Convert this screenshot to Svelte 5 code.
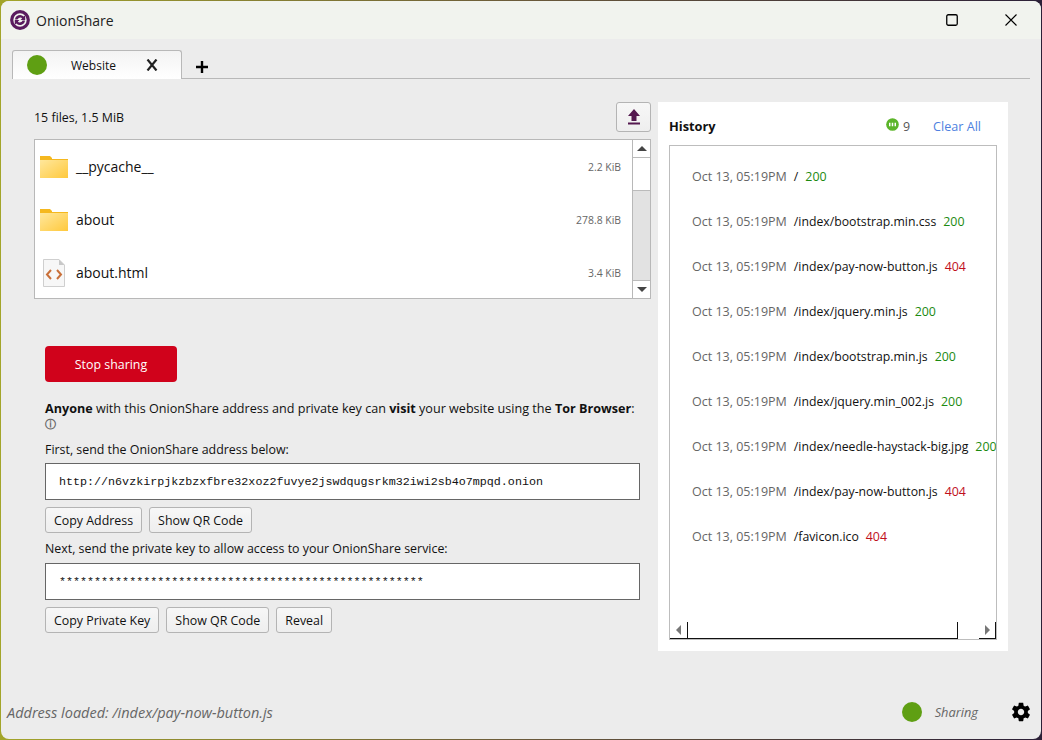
<script>
  const files = [
    { name: '__pycache__', size: '2.2 KiB', kind: 'folder' },
    { name: 'about', size: '278.8 KiB', kind: 'folder' },
    { name: 'about.html', size: '3.4 KiB', kind: 'html' }
  ];
  const history = [
    { path: '/', code: 200 },
    { path: '/index/bootstrap.min.css', code: 200 },
    { path: '/index/pay-now-button.js', code: 404 },
    { path: '/index/jquery.min.js', code: 200 },
    { path: '/index/bootstrap.min.js', code: 200 },
    { path: '/index/jquery.min_002.js', code: 200 },
    { path: '/index/needle-haystack-big.jpg', code: 200 },
    { path: '/index/pay-now-button.js', code: 404 },
    { path: '/favicon.ico', code: 404 }
  ];
</script>

<div class="window">
  <header class="titlebar">
    <svg class="logo" viewBox="0 0 20 20" width="20" height="20">
      <circle cx="10" cy="10" r="8.3" fill="none" stroke="#5a1a5e" stroke-width="3.2" />
      <path d="M5 9.5 A5 5 0 0 1 13.6 6.6 L15.2 5.2 L15.2 10 L10.6 10 L12.2 8.3 A3 3 0 0 0 7.4 9.5 Z" fill="#5a1a5e" />
      <path d="M15 10.5 A5 5 0 0 1 6.4 13.4 L4.8 14.8 L4.8 10 L9.4 10 L7.8 11.7 A3 3 0 0 0 12.6 10.5 Z" fill="#5a1a5e" />
    </svg>
    <span class="app-name">OnionShare</span>
    <div class="controls">
      <svg viewBox="0 0 12 12" width="12" height="12"><rect x="0.75" y="0.75" width="10.5" height="10.5" rx="1.5" fill="none" stroke="#000" stroke-width="1.3" /></svg>
      <svg viewBox="0 0 12 12" width="12" height="12"><path d="M0.5 0.5 L11.5 11.5 M11.5 0.5 L0.5 11.5" stroke="#000" stroke-width="1.1" /></svg>
    </div>
  </header>

  <div class="tabbar">
    <div class="tab">
      <span class="dot"></span>
      <span class="tab-label">Website</span>
      <svg class="tab-close" viewBox="0 0 12 12" width="12" height="12"><path d="M1.5 0.5 L10.5 11.5 M10.5 0.5 L1.5 11.5" stroke="#222" stroke-width="2.2" /></svg>
    </div>
    <svg class="tab-add" viewBox="0 0 14 14" width="14" height="14"><path d="M7 1 V13 M1 7 H13" stroke="#000" stroke-width="2.4" /></svg>
  </div>

  <main class="content">
    <section class="left">
      <div class="files-head">
        <span>15 files, 1.5 MiB</span>
        <button class="upload">
          <svg viewBox="0 0 16 16" width="16" height="16"><path d="M8 0 L14 7 H10.5 V12 H5.5 V7 H2 Z M2 13.5 H14 V15.5 H2 Z" fill="#54184f" /></svg>
        </button>
      </div>

      <div class="filelist">
        <ul>
          {#each files as f}
            <li>
              <span class="ficon">
                {#if f.kind === 'folder'}
                  <svg viewBox="0 0 28 22" width="28" height="22">
                    <defs>
                      <linearGradient id="fold" x1="0" y1="0" x2="1" y2="1">
                        <stop offset="0" stop-color="#ffe79c" />
                        <stop offset="1" stop-color="#ffc93d" />
                      </linearGradient>
                    </defs>
                    <path d="M0 0 H10 L12 2 V3 H28 V22 H0 Z" fill="#f5b81f" />
                    <rect x="0" y="4" width="28" height="18" fill="url(#fold)" />
                  </svg>
                {:else}
                  <svg viewBox="0 0 22 28" width="22" height="28">
                    <path d="M0.5 0.5 H16 L21.5 6 V27.5 H0.5 Z" fill="#f7f7f7" stroke="#cfcfcf" />
                    <path d="M16 0.5 V6 H21.5 Z" fill="#c8c8c8" />
                    <path d="M8 11 L4 15.5 L8 20 M14 11 L18 15.5 L14 20" fill="none" stroke="#c9703a" stroke-width="2" />
                  </svg>
                {/if}
              </span>
              <span class="fname">{f.name}</span>
              <span class="fsize">{f.size}</span>
            </li>
          {/each}
        </ul>
        <div class="vscroll">
          <span class="arrow up"></span>
          <div class="track"><div class="thumb"></div></div>
          <span class="arrow down"></span>
        </div>
      </div>

      <div class="share">
        <button class="stop">Stop sharing</button>
        <p class="desc"><b>Anyone</b> with this OnionShare address and private key can <b>visit</b> your website using the <b>Tor Browser</b>: <span class="info">ⓘ</span></p>
        <p class="step">First, send the OnionShare address below:</p>
        <div class="codebox">http://n6vzkirpjkzbzxfbre32xoz2fuvye2jswdqugsrkm32iwi2sb4o7mpqd.onion</div>
        <div class="btns">
          <button>Copy Address</button>
          <button>Show QR Code</button>
        </div>
        <p class="step second">Next, send the private key to allow access to your OnionShare service:</p>
        <div class="codebox">****************************************************</div>
        <div class="btns">
          <button>Copy Private Key</button>
          <button>Show QR Code</button>
          <button>Reveal</button>
        </div>
      </div>
    </section>

    <aside class="history">
      <div class="hist-head">
        <b>History</b>
        <span class="count">
          <svg viewBox="0 0 14 14" width="13" height="13">
            <circle cx="7" cy="7" r="6.8" fill="#5cb52a" />
            <path d="M4 5 V9 M7 5 V9 M10 5 V9" stroke="#fff" stroke-width="1.6" />
          </svg>
          9
        </span>
        <span class="clear">Clear All</span>
      </div>
      <div class="hist-box">
        <div class="hist-rows">
          {#each history as h}
            <div class="hist-row">
              <span class="ts">Oct 13, 05:19PM</span>
              <span class="path">{h.path}</span>
              <span class={h.code === 200 ? 'ok' : 'bad'}>{h.code}</span>
            </div>
          {/each}
        </div>
        <div class="hscroll">
          <div class="harrow"><span class="tri left-tri"></span></div>
          <div class="hthumb"></div>
          <div class="hgap"></div>
          <div class="harrow last"><span class="tri right-tri"></span></div>
        </div>
      </div>
    </aside>
  </main>

  <footer class="status">
    <span class="loaded">Address loaded: /index/pay-now-button.js</span>
    <span class="dot status-dot"></span>
    <span class="sharing">Sharing</span>
    <svg class="gear" viewBox="0 0 24 24" width="22" height="22"><path d="M19.43 12.98c.04-.32.07-.64.07-.98s-.03-.66-.07-.98l2.11-1.65c.19-.15.24-.42.12-.64l-2-3.46c-.12-.22-.39-.3-.61-.22l-2.49 1c-.52-.4-1.08-.73-1.69-.98l-.38-2.65C14.46 2.18 14.25 2 14 2h-4c-.25 0-.46.18-.49.42l-.38 2.65c-.61.25-1.17.59-1.69.98l-2.49-1c-.23-.09-.49 0-.61.22l-2 3.46c-.13.22-.07.49.12.64l2.11 1.65c-.04.32-.07.65-.07.98s.03.66.07.98l-2.11 1.65c-.19.15-.24.42-.12.64l2 3.46c.12.22.39.3.61.22l2.49-1c.52.4 1.08.73 1.69.98l.38 2.65c.03.24.24.42.49.42h4c.25 0 .46-.18.49-.42l.38-2.65c.61-.25 1.17-.59 1.69-.98l2.49 1c.23.09.49 0 .61-.22l2-3.46c.12-.22.07-.49-.12-.64l-2.11-1.65zM12 15.5c-1.93 0-3.5-1.57-3.5-3.5s1.57-3.5 3.5-3.5 3.5 1.57 3.5 3.5-1.57 3.5-3.5 3.5z" fill="#000" /></svg>
  </footer>
</div>

<style>
  :global(body) {
    margin: 0;
    height: 740px;
    background: linear-gradient(90deg, #a3a52a 0%, #6b5a3a 50%, #2c2038 100%);
    font-family: "Open Sans", "Noto Sans", sans-serif;
    font-size: 12.4px;
    color: #111;
  }
  .window {
    box-sizing: border-box;
    width: 1040px;
    height: 738px;
    margin: 0 1px;
    position: relative;
    top: 1px;
    background: #ececec;
    border-radius: 8px;
    overflow: hidden;
    display: flex;
    flex-direction: column;
  }
  .titlebar {
    height: 38px;
    flex: none;
    background: #f1f3ee;
    display: flex;
    align-items: center;
    padding-left: 9px;
  }
  .app-name { margin-left: 6px; font-size: 14px; color: #222; }
  .controls {
    margin-left: auto;
    display: flex;
    gap: 47px;
    padding-right: 24px;
  }
  .tabbar {
    height: 40px;
    flex: none;
    margin: 0 11px;
    box-sizing: border-box;
    border-bottom: 1px solid #b8b8b8;
    display: flex;
    align-items: flex-end;
  }
  .tab {
    box-sizing: border-box;
    width: 170px;
    height: 29px;
    margin-bottom: -1px;
    background: linear-gradient(#f3f3f3, #ffffff);
    border: 1px solid #b8b8b8;
    border-bottom: none;
    border-radius: 3px 3px 0 0;
    display: flex;
    align-items: center;
    padding-left: 14px;
  }
  .dot {
    display: block;
    width: 20px;
    height: 20px;
    border-radius: 50%;
    background: #5f9f13;
    flex: none;
  }
  .tab-label { margin-left: 24px; font-size: 12px; }
  .tab-close { margin-left: 30px; }
  .tab-add { margin: 0 0 4px 13px; }
  .content {
    flex: 1;
    min-height: 0;
    display: flex;
    padding: 23px 33px 0 33px;
    gap: 7px;
  }
  .left { width: 617px; flex: none; }
  .files-head {
    display: flex;
    justify-content: space-between;
    align-items: center;
    height: 30px;
    margin-bottom: 7px;
  }
  .upload {
    width: 35px;
    height: 30px;
    padding: 0;
    display: flex;
    align-items: center;
    justify-content: center;
  }
  .filelist {
    box-sizing: border-box;
    height: 160px;
    background: #fff;
    border: 1px solid #b8b8b8;
    display: flex;
  }
  ul { list-style: none; margin: 0; padding: 0; flex: 1; }
  li {
    height: 53px;
    display: flex;
    align-items: center;
    padding: 0 11px 0 5px;
  }
  .ficon { width: 28px; display: flex; justify-content: center; }
  .fname { margin-left: 8px; font-size: 14px; }
  .fsize { margin-left: auto; font-size: 10.4px; color: #666; }
  .vscroll {
    width: 17px;
    border-left: 1px solid #b8b8b8;
    display: flex;
    flex-direction: column;
  }
  .arrow {
    height: 17px;
    flex: none;
    display: flex;
    align-items: center;
    justify-content: center;
  }
  .arrow::before {
    content: "";
    border-left: 5px solid transparent;
    border-right: 5px solid transparent;
  }
  .up::before { border-bottom: 5px solid #444; }
  .down::before { border-top: 5px solid #444; }
  .track {
    flex: 1;
    background: #e2e2e2;
    border-top: 1px solid #bbb;
    border-bottom: 1px solid #bbb;
  }
  .thumb { height: 32px; background: #fff; border-bottom: 1px solid #bbb; }
  .share { padding: 47px 0 0 11px; }
  button {
    box-sizing: border-box;
    height: 26px;
    padding: 0 8px;
    font: inherit;
    color: #111;
    background: linear-gradient(#f7f7f7, #eeeeee);
    border: 1px solid #b4b4b4;
    border-radius: 3px;
  }
  .stop {
    display: block;
    width: 132px;
    height: 36px;
    background: #d0021b;
    border: none;
    border-radius: 4px;
    color: #fff;
  }
  p { margin: 0; }
  .desc { width: 595px; margin-top: 19px; line-height: 15px; font-size: 12.6px; }
  .info { color: #666; font-size: 11px; line-height: 11px; font-weight: 700; }
  .step { margin-top: 11px; line-height: 16px; }
  .step.second { margin-top: 8px; }
  .codebox {
    box-sizing: border-box;
    width: 595px;
    height: 37px;
    margin-top: 5px;
    padding: 2px 0 0 13px;
    background: #fff;
    border: 1px solid #666;
    font-family: "Liberation Mono", monospace;
    font-size: 11.7px;
    line-height: 33px;
  }
  .step.second + .codebox { margin-top: 6px; }
  .btns { display: flex; gap: 7px; margin-top: 7px; }
  .history {
    width: 350px;
    height: 549px;
    flex: none;
    box-sizing: border-box;
    background: #fff;
    padding: 0 11px 11px;
    display: flex;
    flex-direction: column;
  }
  .hist-head {
    height: 43px;
    flex: none;
    box-sizing: border-box;
    padding-top: 5px;
    display: flex;
    align-items: center;
  }
  .hist-head b { font-size: 12.8px; }
  .count {
    margin-left: auto;
    display: flex;
    align-items: center;
    gap: 4px;
    color: #555;
  }
  .count svg { margin-top: -4px; }
  .clear { margin: 0 16px 0 23px; color: #4e81e0; font-size: 12.6px; }
  .hist-box {
    flex: 1;
    min-height: 0;
    border: 1px solid #bdbdbd;
    display: flex;
    flex-direction: column;
    overflow: hidden;
  }
  .hist-rows { flex: 1; padding: 8px 0 0 22px; overflow: hidden; }
  .hist-row {
    height: 45px;
    display: flex;
    align-items: center;
    gap: 7px;
    white-space: nowrap;
    width: 400px;
  }
  .ts { color: #666; font-size: 12.5px; }
  .path { font-size: 12.25px; }
  .ok { color: #1c8a11; }
  .bad { color: #c0101c; }
  .hscroll { height: 17px; flex: none; display: flex; }
  .harrow {
    width: 17px;
    box-sizing: border-box;
    display: flex;
    align-items: center;
    justify-content: center;
    border-bottom: 1px solid #111;
  }
  .harrow.last { border-right: 1px solid #111; }
  .tri { border-top: 5px solid transparent; border-bottom: 5px solid transparent; }
  .left-tri { border-right: 5px solid #777; }
  .right-tri { border-left: 5px solid #777; }
  .hthumb {
    width: 271px;
    box-sizing: border-box;
    border-left: 1px solid #111;
    border-right: 1px solid #111;
    border-bottom: 1px solid #111;
  }
  .hgap { flex: 1; }
  .status {
    height: 60px;
    flex: none;
    box-sizing: border-box;
    padding: 6px 9px 0 6px;
    display: flex;
    align-items: center;
    color: #666;
    font-style: italic;
  }
  .loaded { font-size: 14.5px; }
  .status-dot { margin-left: auto; }
  .sharing { margin-left: 13px; font-size: 12.8px; }
  .gear { margin-left: 32px; }
</style>
